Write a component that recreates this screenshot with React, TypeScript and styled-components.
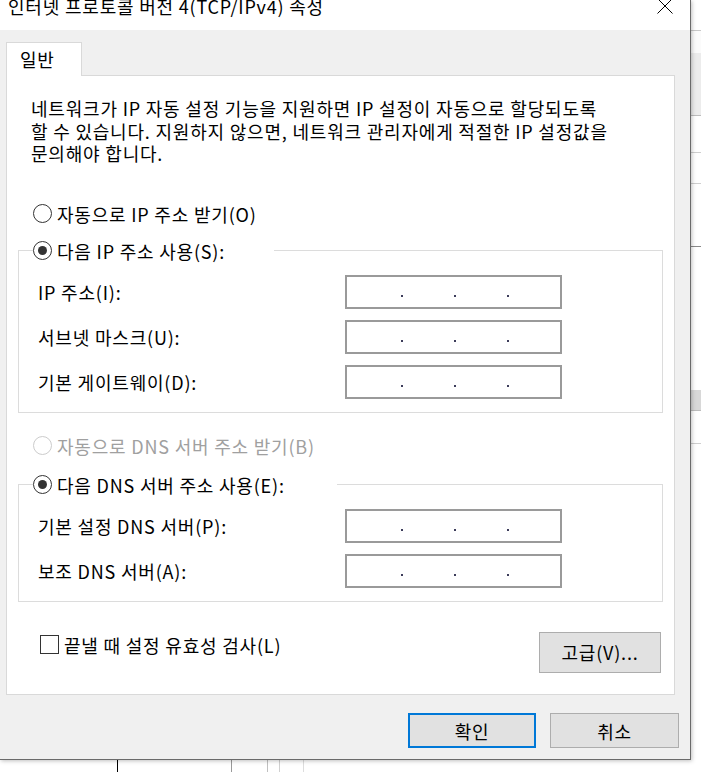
import React from 'react'
import styled, { createGlobalStyle } from 'styled-components'

const GlobalStyle = createGlobalStyle`
  * { box-sizing: border-box; }
  html, body { margin: 0; padding: 0; background: #ffffff; }
  body {
    font-family: 'Noto Sans CJK KR', 'Noto Sans', sans-serif;
    font-size: 18px;
    letter-spacing: 0.8px;
    color: #000000;
  }
`

const Screen = styled.div`
  width: 701px;
  height: 772px;
  overflow: hidden;
  display: flex;
  flex-direction: column;
  background: #ffffff;
`

const TopArea = styled.div`
  display: flex;
  height: 760px;
`

const Dialog = styled.div`
  width: 691px;
  height: 760px;
  display: flex;
  flex-direction: column;
  border-right: 1px solid #6a6a6a;
  border-bottom: 1px solid #6a6a6a;
  box-shadow: 1px 1px 4px rgba(0, 0, 0, 0.25);
  position: relative;
  z-index: 1;
`

const TitleBar = styled.div`
  height: 30px;
  flex: none;
  display: flex;
  justify-content: space-between;
  align-items: flex-start;
  padding-left: 8px;
  background: #ffffff;
`

const Title = styled.span`
  font-size: 18px;
  line-height: 18px;
  margin-top: -3px;
  white-space: nowrap;
`

const CloseIcon = styled.svg`
  width: 16px;
  height: 16px;
  margin-top: -2px;
  margin-right: 17px;
`

const Body = styled.div`
  flex: 1;
  display: flex;
  flex-direction: column;
  padding: 12px 11px 11px 6px;
  background: #f0f0f0;
`

const Tabs = styled.div`
  display: flex;
  position: relative;
  z-index: 1;
`

const Tab = styled.div<{ $active?: boolean }>`
  width: 76px;
  height: 34px;
  margin-bottom: -1px;
  padding: 4px 0 0 13px;
  line-height: 24px;
  background: ${p => (p.$active ? '#ffffff' : '#f0f0f0')};
  border: 1px solid #d9d9d9;
  border-bottom: none;
`

const Panel = styled.div`
  margin-right: 4px;
  height: 620px;
  display: flex;
  flex-direction: column;
  padding: 21px 0 21px 0;
  background: #ffffff;
  border: 1px solid #d9d9d9;
`

const Intro = styled.p`
  margin: 0 0 38px 24px;
  line-height: 22.5px;
  white-space: nowrap;
`

const RadioRow = styled.label<{ $disabled?: boolean }>`
  display: flex;
  align-items: center;
  gap: 5px;
  height: 22px;
  line-height: 22px;
  color: ${p => (p.$disabled ? '#a0a0a0' : '#000000')};
  white-space: nowrap;
`

const StandaloneRadio = styled(RadioRow)<{ $top: number }>`
  margin: ${p => p.$top}px 0 0 26px;
`

const RadioCircle = styled.span<{ $checked?: boolean; $disabled?: boolean }>`
  flex: none;
  width: 19px;
  height: 19px;
  border-radius: 50%;
  border: 1px solid ${p => (p.$disabled ? '#cccccc' : '#333333')};
  background: #ffffff;
  display: flex;
  align-items: center;
  justify-content: center;

  &::after {
    content: '';
    display: ${p => (p.$checked ? 'block' : 'none')};
    width: 9px;
    height: 9px;
    border-radius: 50%;
    background: #333333;
  }
`

const Group = styled.fieldset<{ $top: number }>`
  margin: ${p => p.$top}px 11px 0 11px;
  padding: 13px 19px 13px 14px;
  border: 1px solid #dcdcdc;
  min-width: 0;
  display: flex;
  flex-direction: column;
  gap: 11px;
`

const Legend = styled.legend<{ $width: number }>`
  padding: 0;
  width: ${p => p.$width}px;
  background: #ffffff;
`

const FieldRow = styled.div`
  display: flex;
  align-items: center;
  margin-left: 5px;
`

const FieldLabel = styled.span`
  width: 307px;
  white-space: nowrap;
`

const IpBox = styled.div`
  width: 217px;
  height: 34px;
  display: flex;
  align-items: center;
  padding-left: 4px;
  border: 2px solid #9a9a9a;
  background: #ffffff;
`

const Segment = styled.span`
  width: 49px;
  height: 100%;
`

const Dot = styled.span`
  width: 2px;
  height: 2px;
  margin: 8px 1px 0 1px;
  background: #3c3c5a;
`

const PanelFooter = styled.div`
  margin-top: 30px;
  display: flex;
  justify-content: space-between;
  align-items: flex-start;
  padding: 0 13px 0 33px;
`

const CheckRow = styled.label`
  display: flex;
  align-items: center;
  gap: 5px;
  height: 22px;
  margin-top: 2px;
  white-space: nowrap;
`

const CheckBox = styled.span`
  width: 19px;
  height: 19px;
  border: 1px solid #333333;
  background: #ffffff;
`

const Button = styled.button<{ $width: number; $height: number; $primary?: boolean }>`
  width: ${p => p.$width}px;
  height: ${p => p.$height}px;
  padding: 0;
  font: inherit;
  letter-spacing: inherit;
  color: #000000;
  background: #e1e1e1;
  border: ${p => (p.$primary ? '2px solid #0078d7' : '1px solid #adadad')};
  display: flex;
  align-items: center;
  justify-content: center;
`

const DialogButtons = styled.div`
  margin-top: 18px;
  display: flex;
  justify-content: flex-end;
  gap: 14px;
`

const SideStrip = styled.div`
  flex: 1;
  background: linear-gradient(
    to bottom,
    #ffffff 0 30px,
    #c8c8c8 30px 31px,
    #fbfbfb 31px 53px,
    #ececec 53px 115px,
    #bdbdbd 115px 116px,
    #ffffff 116px 152px,
    #cfcfcf 152px 153px,
    #ffffff 153px 183px,
    #cfcfcf 183px 184px,
    #ffffff 184px 246px,
    #8a8a8a 246px 247px,
    #ffffff 247px 390px,
    #d8d8d8 390px 410px,
    #bdbdbd 410px 411px,
    #ffffff 411px 443px,
    #cfcfcf 443px 444px,
    #ffffff 444px 760px
  );
`

const BottomStrip = styled.div`
  height: 12px;
  background:
    linear-gradient(#000000, #000000) 117px 0 / 1px 100% no-repeat,
    linear-gradient(#9a9a9a, #9a9a9a) 231px 0 / 1px 100% no-repeat,
    linear-gradient(#c0c0c0, #c0c0c0) 267px 0 / 1px 100% no-repeat,
    linear-gradient(#d0d0d0, #d0d0d0) 279px 0 / 1px 100% no-repeat,
    linear-gradient(#dddddd, #dddddd) 303px 0 / 1px 100% no-repeat,
    #ffffff;
`

const IpInput = () => (
  <IpBox>
    <Segment />
    <Dot />
    <Segment />
    <Dot />
    <Segment />
    <Dot />
    <Segment />
  </IpBox>
)

const ipRows = ['IP 주소(I):', '서브넷 마스크(U):', '기본 게이트웨이(D):']
const dnsRows = ['기본 설정 DNS 서버(P):', '보조 DNS 서버(A):']

export default function App() {
  return (
    <>
      <GlobalStyle />
      <Screen>
        <TopArea>
          <Dialog>
            <TitleBar>
              <Title>인터넷 프로토콜 버전 4(TCP/IPv4) 속성</Title>
              <CloseIcon viewBox="0 0 16 16">
                <path d="M0.5 0.5 L15.5 15.5 M15.5 0.5 L0.5 15.5" stroke="#000" strokeWidth="1" fill="none" />
              </CloseIcon>
            </TitleBar>
            <Body>
              <Tabs>
                <Tab $active>일반</Tab>
              </Tabs>
              <Panel>
                <Intro>
                  네트워크가 IP 자동 설정 기능을 지원하면 IP 설정이 자동으로 할당되도록
                  <br />
                  할 수 있습니다. 지원하지 않으면, 네트워크 관리자에게 적절한 IP 설정값을
                  <br />
                  문의해야 합니다.
                </Intro>

                <StandaloneRadio $top={0}>
                  <RadioCircle />
                  자동으로 IP 주소 받기(O)
                </StandaloneRadio>

                <Group $top={15}>
                  <Legend $width={241}>
                    <RadioRow>
                      <RadioCircle $checked />
                      다음 IP 주소 사용(S):
                    </RadioRow>
                  </Legend>
                  {ipRows.map(label => (
                    <FieldRow key={label}>
                      <FieldLabel>{label}</FieldLabel>
                      <IpInput />
                    </FieldRow>
                  ))}
                </Group>

                <StandaloneRadio $top={22} $disabled>
                  <RadioCircle $disabled />
                  자동으로 DNS 서버 주소 받기(B)
                </StandaloneRadio>

                <Group $top={17}>
                  <Legend $width={304}>
                    <RadioRow>
                      <RadioCircle $checked />
                      다음 DNS 서버 주소 사용(E):
                    </RadioRow>
                  </Legend>
                  {dnsRows.map(label => (
                    <FieldRow key={label}>
                      <FieldLabel>{label}</FieldLabel>
                      <IpInput />
                    </FieldRow>
                  ))}
                </Group>

                <PanelFooter>
                  <CheckRow>
                    <CheckBox />
                    끝낼 때 설정 유효성 검사(L)
                  </CheckRow>
                  <Button $width={122} $height={41}>고급(V)...</Button>
                </PanelFooter>
              </Panel>

              <DialogButtons>
                <Button $width={128} $height={35} $primary>확인</Button>
                <Button $width={129} $height={35}>취소</Button>
              </DialogButtons>
            </Body>
          </Dialog>
          <SideStrip />
        </TopArea>
        <BottomStrip />
      </Screen>
    </>
  )
}
